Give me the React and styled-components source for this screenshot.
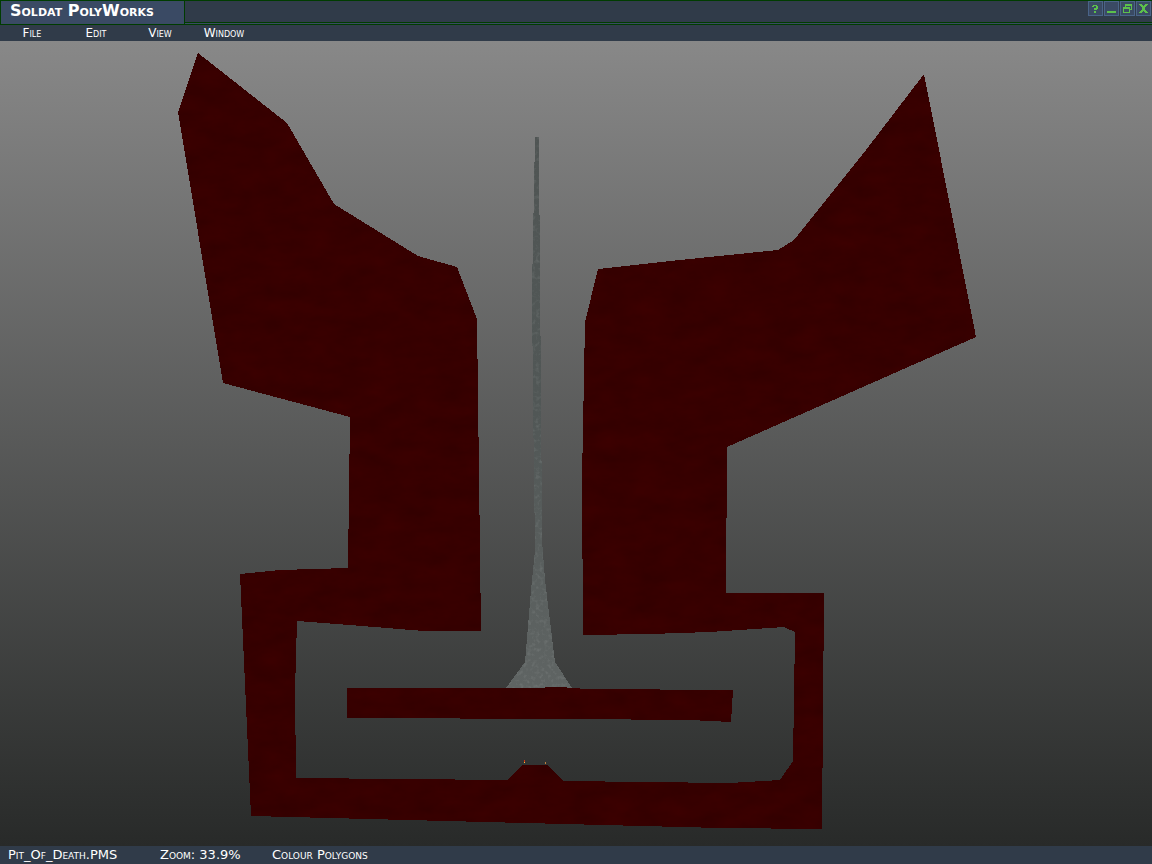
import React from 'react';
import styled, { createGlobalStyle } from 'styled-components';

const GlobalStyle = createGlobalStyle`
  * { box-sizing: border-box; }
  body { margin: 0; background: #282a29; }
`;

const Window = styled.div`
  display: flex;
  flex-direction: column;
  min-height: 100vh;
  color: #ffffff;
  font-family: "DejaVu Sans", sans-serif;
  font-size: 12px;
  line-height: 16px;
  font-variant: small-caps;
`;

const TitleBar = styled.header`
  display: flex;
  height: 25px;
  border-top: 1px solid #003c00;
  border-bottom: 1px solid #003c00;
  background: #3a4a64;
`;

const TitleTab = styled.h1`
  margin: 0;
  padding: 0 9px;
  min-width: 185px;
  border: solid #003c00;
  border-width: 0 1px;
  font-size: 16px;
  font-weight: bold;
  line-height: 20px;
  white-space: nowrap;
`;

const TitleFill = styled.div`
  display: flex;
  flex: 1;
  justify-content: flex-end;
  gap: 1px;
  height: 22px;
  padding-right: 1px;
  border-bottom: 1px solid #003c00;
  background: #303b49;
`;

const CaptionButton = styled.button`
  width: 15px;
  height: 15px;
  padding: 0;
  border: 1px solid #4a6488;
  background: #3a4a64;
  color: #5cc04c;
  svg { display: block; }
`;

const MenuBar = styled.nav`
  display: flex;
  height: 16px;
  background: #303b49;
`;

const MenuButton = styled.button`
  width: 64px;
  padding: 0;
  border: 0;
  background: none;
  color: inherit;
  font: inherit;
`;

const Viewport = styled.main`
  display: flex;
  flex: 1;
  background: linear-gradient(#888888, #282a29);
`;

const MapDrawing = styled.svg`
  display: block;
  flex: 1;
  width: 100%;
  min-height: 0;
`;

const StatusBar = styled.footer`
  display: grid;
  grid-template-columns: 152px 112px 1fr;
  height: 18px;
  padding-left: 8px;
  background: #303b49;
  font-size: 13px;
  line-height: 18px;
  white-space: nowrap;
`;

const captions = [
  { name: 'Help', path: 'M4 3h4v1h1v3h-1v1h-3v-2h2v-2h-2v1h-2v-1h1zM5 9h2v2h-2z' },
  { name: 'Minimize', path: 'M2 9h9v2h-9z' },
  { name: 'Restore', path: 'M4 2h7v6h-2v-1h1v-3h-5v1h-1zM2 5h7v6h-7zM3 7v3h5v-3z' },
  {
    name: 'Close',
    path: 'M2 2h3v1h1v1h1v-1h1v-1h3v1h-1v1h-1v1h-1v3h1v1h1v1h1v1h-3v-1h-1v-1h-1v1h-1v1h-3v-1h1v-1h1v-1h1v-3h-1v-1h-1v-1h-1z',
  },
];

const terrain =
  'M198 53L287 123L334 204L418 256L457 267L477 319L481 631H424L350 625L297 621L295 690L296 778L508 780L522 765H547L563 781L730 783L780 780L793 761L795 632L784 627L710 632L650 634L583 635L582 480L585 322L598 269L670 261L778 250L794 240L866 150L924 74L976 337L727 447L726 593H824L822 829L720 828L251 816L240 574L280 570L348 568L350 417L223 383L178 112Z';

const platform =
  'M347 688H530L560 687L587 689L733 690L731 722L690 720L571 719L347 718Z';

const spire =
  'M535 137H539L540 290L541 380L542 540L545 580L555 662L572 688H506L525 662L531 590L535 550L533 400L532 290Z';

export default function App() {
  return (
    <Window>
      <GlobalStyle />
      <TitleBar>
        <TitleTab>Soldat PolyWorks</TitleTab>
        <TitleFill>
          {captions.map(({ name, path }) => (
            <CaptionButton key={name} aria-label={name}>
              <svg width="13" height="13" viewBox="0 0 13 13" shapeRendering="crispEdges">
                <path d={path} fill="currentColor" fillRule="evenodd" />
                {name === 'Close' && <path d="M5 5h3v3h-3z" fill="currentColor" />}
              </svg>
            </CaptionButton>
          ))}
        </TitleFill>
      </TitleBar>
      <MenuBar>
        {['File', 'Edit', 'View', 'Window'].map((label) => (
          <MenuButton key={label}>{label}</MenuButton>
        ))}
      </MenuBar>
      <Viewport>
        <MapDrawing viewBox="0 41 1152 805" shapeRendering="crispEdges" role="img" aria-label="Map">
          <defs>
            <filter id="rock" x="0" y="0" width="1" height="1" colorInterpolationFilters="sRGB">
              <feTurbulence type="fractalNoise" baseFrequency="0.03 0.06" numOctaves="5" seed="4" />
              <feColorMatrix values="0.05 0 0 0 0.19  0 0 0 0 0  0 0 0 0 0  0 0 0 0 1" />
              <feComposite in2="SourceGraphic" operator="in" />
            </filter>
            <filter id="stone" x="0" y="0" width="1" height="1" colorInterpolationFilters="sRGB">
              <feTurbulence type="fractalNoise" baseFrequency="0.25" numOctaves="3" seed="7" result="noise" />
              <feColorMatrix values="0.16 0 0 0 -0.08  0.16 0 0 0 -0.08  0.16 0 0 0 -0.08  0 0 0 0 1" result="grain" />
              <feComposite in="SourceGraphic" in2="grain" operator="arithmetic" k2="1" k3="1" />
              <feComposite in2="SourceGraphic" operator="in" />
            </filter>
            <linearGradient id="spireShade" x1="0" y1="0" x2="0" y2="1">
              <stop offset="0" stopColor="#505554" />
              <stop offset="0.5" stopColor="#515756" />
              <stop offset="1" stopColor="#5f6463" />
            </linearGradient>
          </defs>
          <path d={spire} fill="url(#spireShade)" filter="url(#stone)" />
          <path d={terrain} fill="#380000" filter="url(#rock)" />
          <path d={platform} fill="#380000" filter="url(#rock)" />
          <path d="M524 760h1v2h-1z" fill="#d03010" />
          <path d="M524 762h1v1h-1z" fill="#ffc040" />
          <path d="M545 762h1v2h-1z" fill="#c08040" />
        </MapDrawing>
      </Viewport>
      <StatusBar>
        <span>Pit_Of_Death.PMS</span>
        <span>Zoom: 33.9%</span>
        <span>Colour Polygons</span>
      </StatusBar>
    </Window>
  );
}
